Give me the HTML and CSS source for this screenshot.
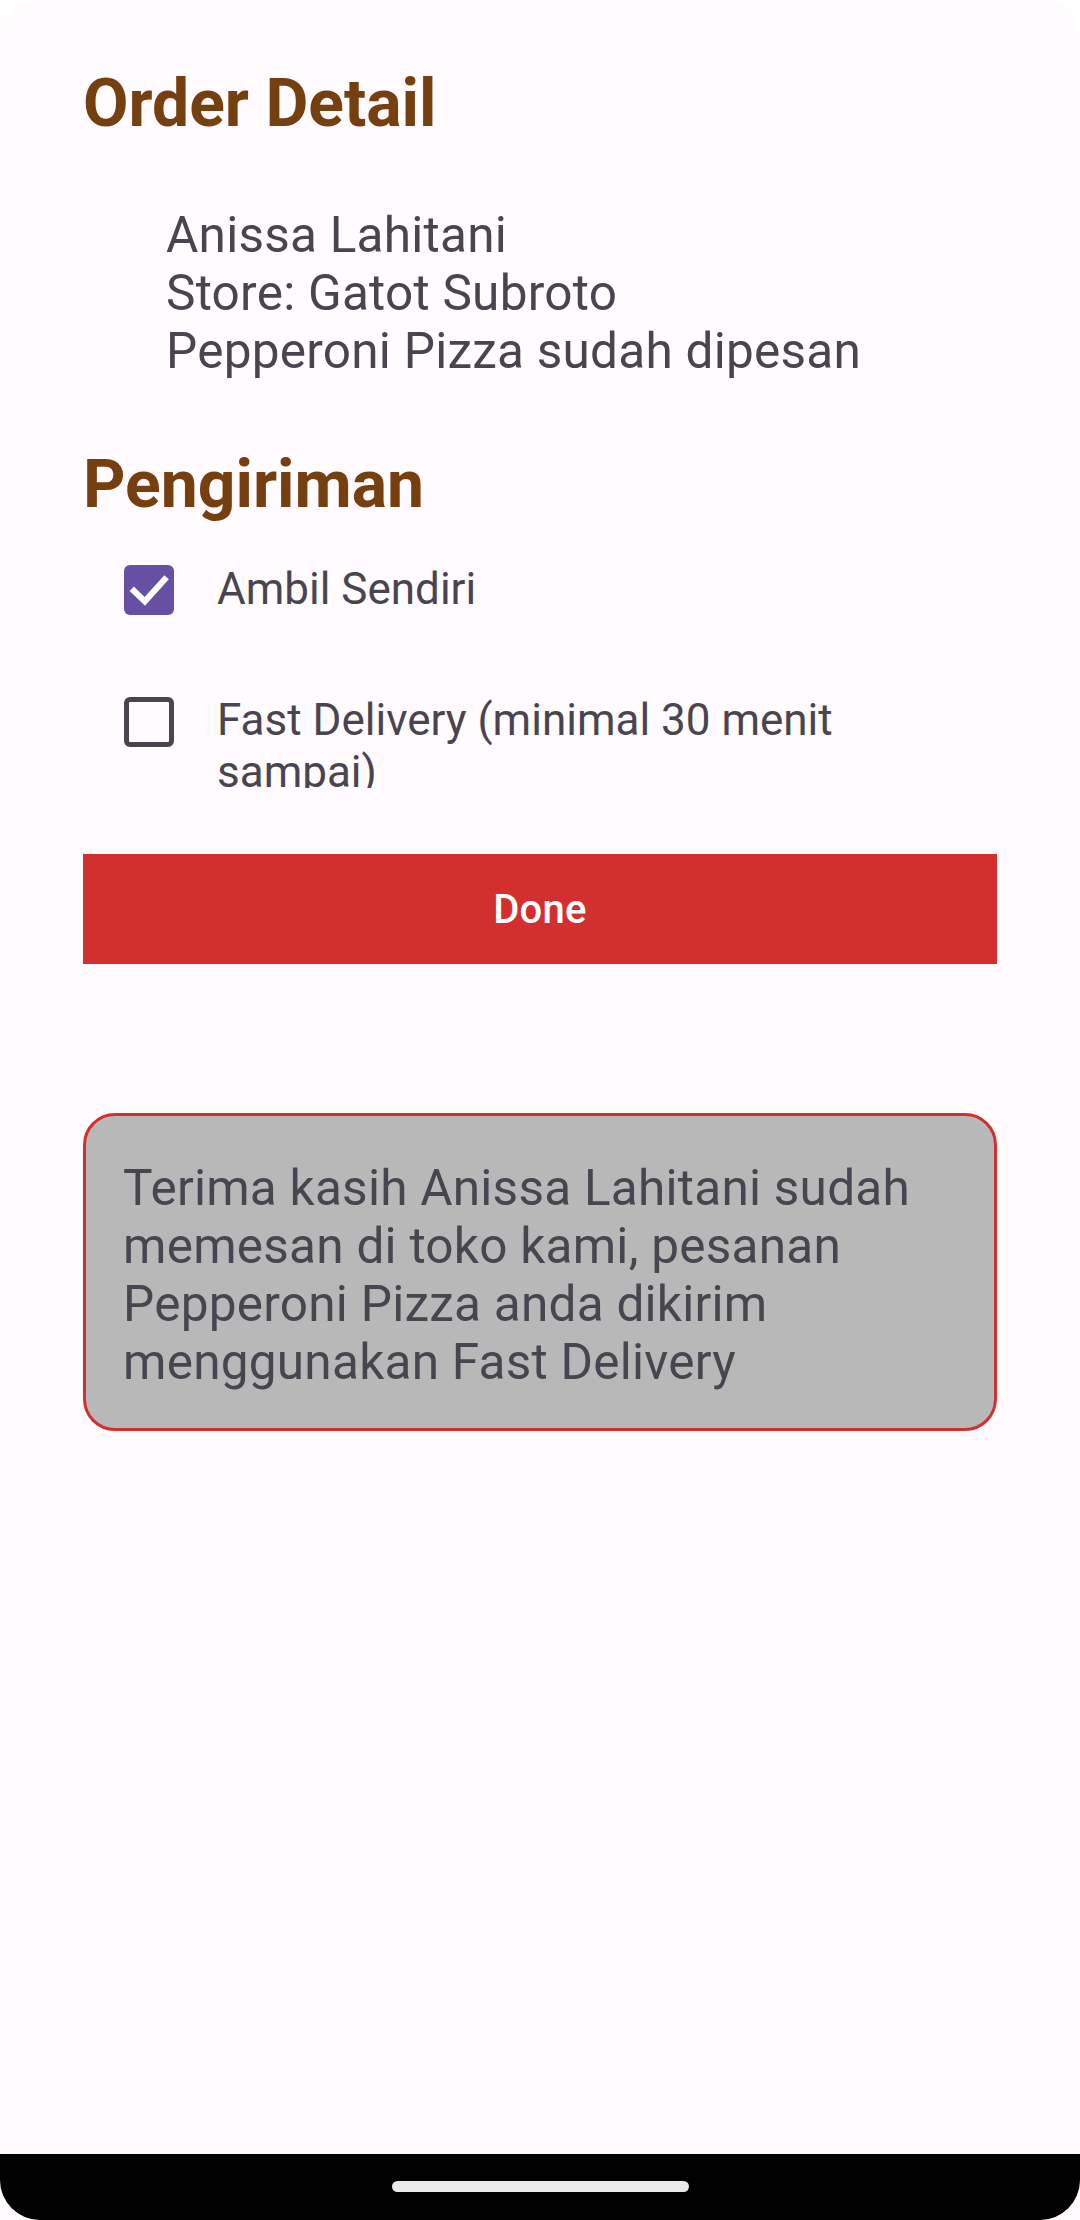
FILE: index.html
```html
<!DOCTYPE html>
<html lang="id">
<head>
<meta charset="utf-8">
<title>Order Detail</title>
<link rel="stylesheet" href="styles.css">
</head>
<body>
<div class="screen">
  <main class="content">
    <h1 class="title">Order Detail</h1>
    <div class="details">
      <div>Anissa Lahitani</div>
      <div>Store: Gatot Subroto</div>
      <div>Pepperoni Pizza sudah dipesan</div>
    </div>
    <h2 class="title section">Pengiriman</h2>
    <div class="options">
      <div class="option">
        <span class="box checked">
          <svg viewBox="0 0 18 18" width="50" height="50"><path d="M3.6 9.3 L7.5 13.1 L14.6 5.2" fill="none" stroke="#fff" stroke-width="2.2" stroke-linecap="square"/></svg>
        </span>
        <span class="label">Ambil Sendiri</span>
      </div>
      <div class="option tall">
        <span class="box"></span>
        <span class="label">Fast Delivery (minimal 30 menit sampai)</span>
      </div>
    </div>
    <button class="done">Done</button>
    <div class="message">Terima kasih Anissa Lahitani sudah memesan di toko kami, pesanan Pepperoni Pizza anda dikirim menggunakan Fast Delivery</div>
  </main>
  <div class="navbar"><span class="pill"></span></div>
</div>
</body>
</html>
```
FILE: styles.css
```css
html, body {
  margin: 0;
  padding: 0;
  background: #ffffff;
}

.screen {
  width: 1080px;
  height: 2220px;
  display: flex;
  flex-direction: column;
  background: #fffbfe;
  border-radius: 40px 40px 0 0;
  overflow: hidden;
  font-family: Roboto, "Noto Sans", sans-serif;
  color: #49454f;
}

.content {
  flex: 1;
  padding: 65px 83px 0 83px;
  display: flex;
  flex-direction: column;
}

.title {
  margin: 0;
  font-size: 66px;
  font-weight: 700;
  line-height: 77px;
  color: #763f10;
}

.details {
  margin-top: 64px;
  padding-left: 83px;
  font-size: 49.5px;
  line-height: 58px;
  letter-spacing: 0.25px;
}

.section {
  margin-top: 66px;
}

.options {
  margin-top: 1px;
  display: flex;
  flex-direction: column;
  padding-right: 80px;
}

.option {
  height: 132px;
  display: flex;
  align-items: center;
  overflow: hidden;
}

.box {
  flex: none;
  box-sizing: border-box;
  width: 50px;
  height: 50px;
  margin-left: 41px;
  border: 5.5px solid #49454f;
  border-radius: 6px;
  display: flex;
  align-items: center;
  justify-content: center;
}

.box.checked {
  border: none;
  background: #6750a4;
}

.box svg {
  display: block;
}

.label {
  margin-left: 43px;
  font-size: 44px;
  line-height: 51.6px;
}

.option.tall {
  align-items: flex-start;
}

.option.tall .box {
  align-self: center;
}

.option.tall .label {
  padding-top: 39px;
}

.done {
  margin-top: 66px;
  height: 110px;
  border: none;
  border-radius: 0;
  background: #d32f2f;
  color: #ffffff;
  font-family: Roboto, "Noto Sans", sans-serif;
  font-size: 40px;
  font-weight: 500;
  letter-spacing: 0.3px;
  padding: 0;
}

.message {
  margin-top: 149px;
  box-sizing: border-box;
  height: 318px;
  padding: 43px 37px 0 37px;
  border: 3px solid #d32f2f;
  border-radius: 32px;
  background: #b8b8b8;
  font-size: 49.5px;
  line-height: 58px;
  letter-spacing: 0.25px;
}

.navbar {
  height: 66px;
  background: #000000;
  border-radius: 0 0 40px 40px;
  display: flex;
  justify-content: center;
  padding-top: 27px;
  box-sizing: border-box;
}

.pill {
  width: 297px;
  height: 11px;
  border-radius: 6px;
  background: #ebebeb;
}
```
